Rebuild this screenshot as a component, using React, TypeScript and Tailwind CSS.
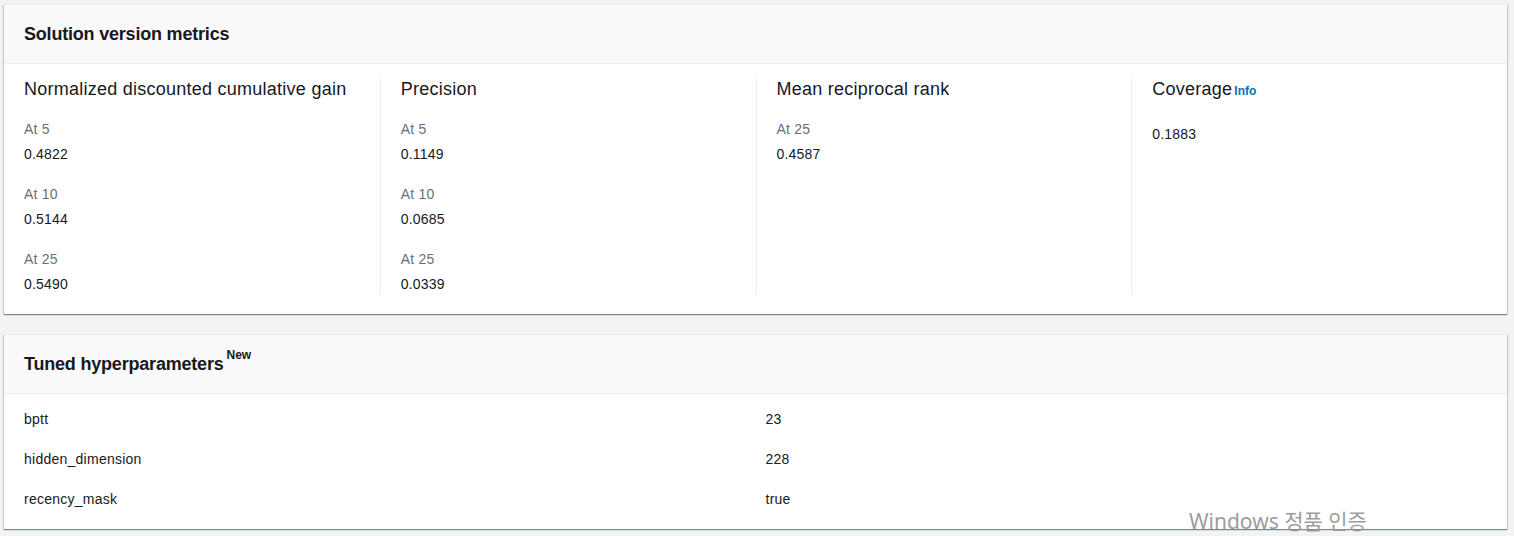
const font = { fontFamily: '"Liberation Sans", Arial, sans-serif' };

type Metric = { label?: string; value: string };

type MetricColumn = {
  title: string;
  info?: boolean;
  items: Metric[];
};

const metrics: MetricColumn[] = [
  {
    title: "Normalized discounted cumulative gain",
    items: [
      { label: "At 5", value: "0.4822" },
      { label: "At 10", value: "0.5144" },
      { label: "At 25", value: "0.5490" },
    ],
  },
  {
    title: "Precision",
    items: [
      { label: "At 5", value: "0.1149" },
      { label: "At 10", value: "0.0685" },
      { label: "At 25", value: "0.0339" },
    ],
  },
  {
    title: "Mean reciprocal rank",
    items: [{ label: "At 25", value: "0.4587" }],
  },
  {
    title: "Coverage",
    info: true,
    items: [{ value: "0.1883" }],
  },
];

const hyperparameters = [
  { name: "bptt", value: "23" },
  { name: "hidden_dimension", value: "228" },
  { name: "recency_mask", value: "true" },
];

function Card({ title, children }: { title: React.ReactNode; children: React.ReactNode }) {
  return (
    <section className="bg-white border-t border-[#eaeded] shadow-[0_1px_1px_0_rgba(0,28,36,0.3),1px_1px_1px_0_rgba(0,28,36,0.15),-1px_1px_1px_0_rgba(0,28,36,0.15)]">
      <div className="bg-[#fafafa] border-b border-[#eaeded] px-5 py-[18px]">
        <h2 className="text-[18px] leading-[22px] font-bold tracking-[-0.2px] text-[#16191f]">{title}</h2>
      </div>
      {children}
    </section>
  );
}

export default function App() {
  return (
    <div className="relative h-[536px] overflow-hidden bg-[#f2f3f3] pl-[4px] pr-[7px] pt-[4px]" style={font}>
      <div className="flex flex-col gap-5">
        <Card title="Solution version metrics">
          <div className="grid grid-cols-4 pt-[14px] pb-5">
            {metrics.map((col, i) => (
              <div
                key={col.title}
                className={`pl-5 pr-4 ${i > 0 ? "border-l border-[#eaeded]" : ""}`}
              >
                <h3 className="text-[18px] leading-[22px] tracking-[0.25px] text-[#16191f]">
                  {col.title}
                  {col.info && (
                    <span className="ml-[2px] text-[12px] font-bold tracking-normal text-[#0073bb]">Info</span>
                  )}
                </h3>
                <div className="mt-[19px] flex flex-col gap-5">
                  {col.items.map((m, j) => (
                    <div key={j} className={m.label ? "" : "mt-[3px]"}>
                      {m.label && (
                        <div className="text-[14px] leading-5 tracking-[0.2px] text-[#687078]">{m.label}</div>
                      )}
                      <div className={`text-[14px] leading-5 tracking-[0.2px] text-[#16191f] ${m.label ? "mt-[5px]" : ""}`}>
                        {m.value}
                      </div>
                    </div>
                  ))}
                </div>
              </div>
            ))}
          </div>
        </Card>

        <Card
          title={
            <>
              Tuned hyperparameters
              <sup className="relative top-[-4px] ml-[3px] align-super text-[12px] font-bold tracking-normal">New</sup>
            </>
          }
        >
          <div className="grid grid-cols-2 gap-x-5 gap-y-5 px-5 pt-[15px] pb-5">
            {hyperparameters.map((p) => (
              <div key={p.name} className="contents">
                <div className="text-[14px] leading-5 tracking-[0.25px] text-[#16191f]">{p.name}</div>
                <div className="text-[14px] leading-5 tracking-[0.25px] text-[#16191f]">{p.value}</div>
              </div>
            ))}
          </div>
        </Card>
      </div>

      <div
        className="absolute left-[1189px] top-[507px] text-[21px] leading-[28px] text-[#9d9d9d] whitespace-nowrap"
        style={{ fontFamily: '"Noto Sans", "Noto Sans CJK KR", sans-serif' }}
      >
        Windows 정품 인증
      </div>
    </div>
  );
}
